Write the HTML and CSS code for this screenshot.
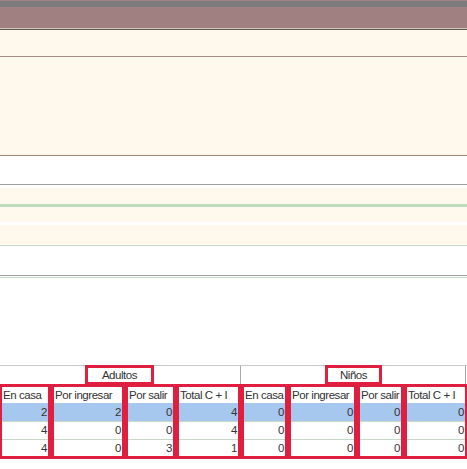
FILE: index.html
```html
<!DOCTYPE html>
<html lang="es">
<head>
  <meta charset="UTF-8" />
  <title>Ocupación</title>
  <link rel="stylesheet" href="styles.css">
</head>
<body>
  <div class="top-gray"></div>
  <div class="title-bar"></div>
  <div class="title-edge"></div>
  <div class="band cream h26 line-mauve"></div>
  <div class="band cream h98 line-brown"></div>
  <div class="band white h28 line-gray"></div>
  <div class="band white h3"></div>
  <div class="band cream h16"></div>
  <div class="band green h3"></div>
  <div class="band cream h15"></div>
  <div class="band white h3"></div>
  <div class="band cream h20 line-green"></div>
  <div class="band white h29 line-gray"></div>
  <div class="band white h1 line-green"></div>
  <div class="spacer"></div>

  <div class="grid">
    <div class="groups">
      <div class="group"><span class="group-label">Adultos</span></div>
      <div class="group"><span class="group-label">Niños</span></div>
    </div>
    <div class="cols">
      <div class="col w52">
        <div class="head">En casa</div>
        <div class="cell sel">2</div><div class="cell">4</div><div class="cell">4</div>
      </div>
      <div class="col w74">
        <div class="head">Por ingresar</div>
        <div class="cell sel">2</div><div class="cell">0</div><div class="cell">0</div>
      </div>
      <div class="col w51">
        <div class="head">Por salir</div>
        <div class="cell sel">0</div><div class="cell">0</div><div class="cell">3</div>
      </div>
      <div class="col w65">
        <div class="head">Total C + I</div>
        <div class="cell sel">4</div><div class="cell">4</div><div class="cell">1</div>
      </div>
      <div class="col w47">
        <div class="head">En casa</div>
        <div class="cell sel">0</div><div class="cell">0</div><div class="cell">0</div>
      </div>
      <div class="col w69">
        <div class="head">Por ingresar</div>
        <div class="cell sel">0</div><div class="cell">0</div><div class="cell">0</div>
      </div>
      <div class="col w47">
        <div class="head">Por salir</div>
        <div class="cell sel">0</div><div class="cell">0</div><div class="cell">0</div>
      </div>
      <div class="col w64">
        <div class="head">Total C + I</div>
        <div class="cell sel">0</div><div class="cell">0</div><div class="cell">0</div>
      </div>
    </div>
  </div>
</body>
</html>
```

FILE: styles.css
```css
body {
  margin: 0;
  width: 467px;
  height: 469px;
  overflow: hidden;
  background: #fff;
  font-family: "Liberation Sans", Arial, sans-serif;
  font-size: 11.5px;
  letter-spacing: -0.45px;
  color: #333;
}

.top-gray {
  height: 6px;
  background: #7d7d7d;
  border-top: 1px solid #a08080;
}

.title-bar {
  height: 21px;
  background: #a08080;
}

.title-edge {
  height: 1px;
  background: #d4c4c4;
  border-bottom: 1px solid #5e5e4a;
}

.band { box-sizing: content-box; }
.cream { background: #fff9ed; }
.white { background: #fff; }
.green { background: #bcdcbc; }

.h1 { height: 1px; }
.h3 { height: 3px; }
.h15 { height: 15px; }
.h16 { height: 16px; }
.h20 { height: 20px; }
.h26 { height: 26px; }
.h28 { height: 28px; }
.h29 { height: 29px; }
.h98 { height: 98px; }

.line-mauve { border-bottom: 1px solid #a88a84; }
.line-brown { border-bottom: 1px solid #a08878; }
.line-gray { border-bottom: 1px solid #a0a0a0; }
.line-green { border-bottom: 1px solid #c8d8c8; }

.spacer { height: 87px; }

/* grid */
.grid {
  margin-left: -1px;
  width: 469px;
}

.groups {
  display: flex;
  height: 18px;
  border-top: 1px solid #c4ccc4;
}

.group {
  display: flex;
  justify-content: center;
  align-items: flex-start;
  border-right: 1px solid #a8a8a8;
}

.group:first-child { width: 241px; }
.group:last-child { width: 224px; }

.group-label {
  box-sizing: border-box;
  height: 20px;
  margin-top: -1px;
  padding: 1px 14px 0;
  border: 3px solid #e01e40;
  line-height: 13px;
}

.group:last-child .group-label { padding: 1px 12px 0; margin-left: 1px; }

.cols { display: flex; }

.col {
  box-sizing: border-box;
  border: 3px solid #e01e40;
  white-space: nowrap;
  overflow: hidden;
}

.w52 { width: 52px; }
.w74 { width: 74px; }
.w51 { width: 51px; }
.w65 { width: 65px; }
.w47 { width: 47px; }
.w69 { width: 69px; }
.w64 { width: 64px; }

.head {
  height: 16px;
  line-height: 17px;
  padding-left: 1px;
}

.cell {
  height: 17px;
  line-height: 17px;
  text-align: right;
  padding-right: 1px;
  border-top: 1px solid #c8d8c8;
}

.cell:last-child {
  height: 16px;
  line-height: 16px;
}

.cell.sel {
  background: #a6c8ee;
  border-top-color: #a6c8ee;
}
```
